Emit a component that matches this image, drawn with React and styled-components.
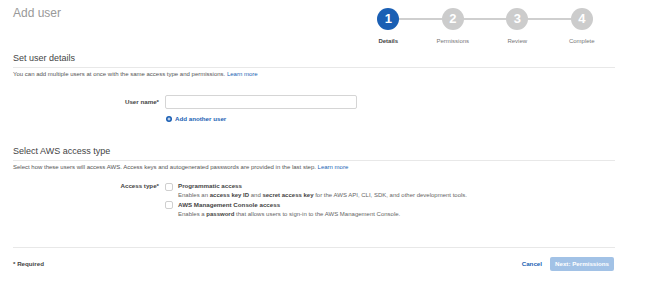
import styled, { createGlobalStyle } from 'styled-components';

const GlobalStyle = createGlobalStyle`
  html, body {
    margin: 0;
    padding: 0;
    background: #fff;
  }
  body {
    font-family: "Liberation Sans", Arial, sans-serif;
    color: #444;
  }
`

const steps = ["Details", "Permissions", "Review", "Complete"];

function App() {
  return (
    <Page>
      <GlobalStyle />
      <Header>
        <Title>Add user</Title>
        <Stepper>
          {steps.map((s, i) => (
            <Step key={s} first={i === 0}>
              <Circle active={i === 0}>{i + 1}</Circle>
              <StepLabel active={i === 0}>{s}</StepLabel>
            </Step>
          ))}
        </Stepper>
      </Header>

      <SectionTitle top={5}>Set user details</SectionTitle>
      <Help>
        You can add multiple users at once with the same access type and permissions. <Link>Learn more</Link>
      </Help>

      <FormRow top={17}>
        <Label>User name*</Label>
        <TextInput type="text" />
      </FormRow>
      <AddRow>
        <PlusIcon viewBox="0 0 16 16">
          <circle cx="8" cy="8" r="8" fill="#1a5fb4" />
          <path d="M8 4v8M4 8h8" stroke="#fff" strokeWidth="2.4" />
        </PlusIcon>
        <BoldLink>Add another user</BoldLink>
      </AddRow>

      <SectionTitle top={23}>Select AWS access type</SectionTitle>
      <Help>
        Select how these users will access AWS. Access keys and autogenerated passwords are provided in the last step. <Link>Learn more</Link>
      </Help>

      <FormRow top={11} align="flex-start">
        <Label>Access type*</Label>
        <Options>
          <Option>
            <Check />
            <div>
              <OptionTitle>Programmatic access</OptionTitle>
              <OptionDesc>
                Enables an <b>access key ID</b> and <b>secret access key</b> for the AWS API, CLI, SDK, and other development tools.
              </OptionDesc>
            </div>
          </Option>
          <Option>
            <Check />
            <div>
              <OptionTitle>AWS Management Console access</OptionTitle>
              <OptionDesc>
                Enables a <b>password</b> that allows users to sign-in to the AWS Management Console.
              </OptionDesc>
            </div>
          </Option>
        </Options>
      </FormRow>

      <Footer>
        <Required>* Required</Required>
        <Actions>
          <Cancel>Cancel</Cancel>
          <NextButton disabled>Next: Permissions</NextButton>
        </Actions>
      </Footer>
    </Page>
  )
}

const Page = styled.div`
  width: 602px;
  padding-left: 13px;
  box-sizing: content-box;
`

const Header = styled.div`
  display: flex;
  justify-content: space-between;
  align-items: flex-start;
  height: 48px;
`

const Title = styled.h1`
  margin: 6px 0 0;
  font-size: 12px;
  line-height: 14px;
  font-weight: 400;
  color: #999;
`

const Stepper = styled.div`
  display: flex;
  margin-right: 1px;
`

const Step = styled.div`
  position: relative;
  width: 64.5px;
  display: flex;
  flex-direction: column;
  align-items: center;
  padding-top: 8px;
  &:before {
    content: "";
    display: ${p => (p.first ? 'none' : 'block')};
    position: absolute;
    top: 18px;
    right: 50%;
    width: 64.5px;
    height: 1.5px;
    background: #cfcfcf;
  }
`

const Circle = styled.div`
  position: relative;
  z-index: 1;
  width: 22px;
  height: 22px;
  border-radius: 50%;
  background: ${p => (p.active ? '#1a5fb4' : '#cccccc')};
  color: #fff;
  font-size: 13px;
  font-weight: 700;
  line-height: 22px;
  text-align: center;
`

const StepLabel = styled.div`
  margin-top: 7px;
  font-size: 6px;
  line-height: 8px;
  font-weight: ${p => (p.active ? 700 : 400)};
  color: ${p => (p.active ? '#444' : '#777')};
`

const SectionTitle = styled.h2`
  margin: ${p => p.top || 3}px 0 0;
  padding-bottom: 2.5px;
  font-size: 9px;
  line-height: 11px;
  font-weight: 400;
  color: #444;
  border-bottom: 1.5px solid #e8e8e8;
`

const Help = styled.p`
  margin: 2.5px 0 0;
  font-size: 6px;
  line-height: 8px;
  color: #555;
`

const Link = styled.a`
  color: #1a5fb4;
  cursor: pointer;
`

const FormRow = styled.div`
  display: flex;
  align-items: ${p => p.align || 'center'};
  gap: 6px;
  margin-top: ${p => p.top || 0}px;
`

const Label = styled.div`
  width: 146px;
  text-align: right;
  font-size: 6.2px;
  line-height: 8px;
  font-weight: 700;
  color: #444;
`

const TextInput = styled.input`
  width: 192px;
  height: 14px;
  box-sizing: border-box;
  border: 1px solid #d5d5d5;
  border-radius: 2px;
  padding: 0 3px;
  font-size: 6px;
  outline: none;
`

const AddRow = styled.div`
  display: flex;
  align-items: center;
  gap: 3px;
  margin: 6px 0 0 153px;
  height: 8px;
`

const PlusIcon = styled.svg`
  width: 6px;
  height: 6px;
`

const BoldLink = styled.a`
  font-size: 6.2px;
  line-height: 8px;
  font-weight: 700;
  color: #1a5fb4;
  cursor: pointer;
`

const Options = styled.div`
  display: flex;
  flex-direction: column;
`

const Option = styled.div`
  display: flex;
  gap: 5px;
`

const Check = styled.span`
  display: block;
  width: 8px;
  height: 8px;
  margin-top: 0.5px;
  box-sizing: border-box;
  border: 1px solid #cfcfcf;
  border-radius: 2px;
  background: #fff;
`

const OptionTitle = styled.div`
  font-size: 6.2px;
  line-height: 9.9px;
  font-weight: 700;
  color: #444;
  margin-top: -1px;
`

const OptionDesc = styled.div`
  font-size: 6px;
  line-height: 9.9px;
  color: #666;
  b {
    color: #444;
  }
`

const Footer = styled.div`
  display: flex;
  justify-content: space-between;
  align-items: center;
  margin-top: 27px;
  border-top: 1.5px solid #e8e8e8;
  padding-top: 9px;
`

const Required = styled.div`
  font-size: 6.2px;
  font-weight: 700;
  color: #444;
`

const Actions = styled.div`
  display: flex;
  align-items: center;
  gap: 8px;
  margin-right: 1px;
`

const Cancel = styled.a`
  font-size: 6.2px;
  font-weight: 700;
  color: #1a5fb4;
  cursor: pointer;
`

const NextButton = styled.button`
  width: 64px;
  height: 14px;
  padding: 0;
  border: none;
  border-radius: 2px;
  background: #a2c2e6;
  color: #fff;
  font-family: "Liberation Sans", Arial, sans-serif;
  font-size: 6.2px;
  font-weight: 700;
`

export default App
